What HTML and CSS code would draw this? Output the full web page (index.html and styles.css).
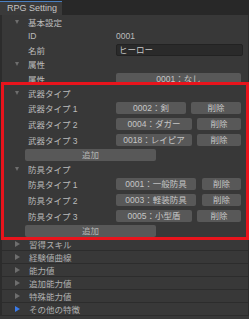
FILE: index.html
```html
<!DOCTYPE html>
<html lang="ja">
<head>
    <meta charset="UTF-8">
    <meta name="viewport" content="width=device-width, initial-scale=1.0">
    <title>RPG Setting</title>
    <link rel="stylesheet" href="styles.css">
</head>
<body>

    <div class="window">
        <div class="tabbar">
            <div class="tab">RPG Setting</div>
        </div>

        <div class="panel">
            <div class="head"><span class="arrow open"></span>基本設定</div>
            <div class="row row-id">
                <span class="label">ID</span>
                <span class="value">0001</span>
            </div>
            <div class="row row-field">
                <span class="label">名前</span>
                <div class="value"><div class="field">ヒーロー</div></div>
            </div>

            <div class="head"><span class="arrow open"></span>属性</div>
            <div class="row row-field">
                <span class="label">属性</span>
                <div class="value"><button class="btn full">0001：なし</button></div>
            </div>

            <div class="head"><span class="arrow open"></span>武器タイプ</div>
            <div class="row row-btn">
                <span class="label">武器タイプ 1</span>
                <div class="pair pair-wide"><button class="btn">0002：剣</button><button class="btn">削除</button></div>
            </div>
            <div class="row row-btn">
                <span class="label">武器タイプ 2</span>
                <div class="pair"><button class="btn">0004：ダガー</button><button class="btn">削除</button></div>
            </div>
            <div class="row row-btn">
                <span class="label">武器タイプ 3</span>
                <div class="pair"><button class="btn">0018：レイピア</button><button class="btn">削除</button></div>
            </div>
            <div class="add-row"><button class="btn add">追加</button></div>

            <div class="head"><span class="arrow open"></span>防具タイプ</div>
            <div class="row row-btn">
                <span class="label">防具タイプ 1</span>
                <div class="pair pair-narrow"><button class="btn">0001：一般防具</button><button class="btn">削除</button></div>
            </div>
            <div class="row row-btn">
                <span class="label">防具タイプ 2</span>
                <div class="pair pair-narrow"><button class="btn">0003：軽装防具</button><button class="btn">削除</button></div>
            </div>
            <div class="row row-btn">
                <span class="label">防具タイプ 3</span>
                <div class="pair"><button class="btn">0005：小型盾</button><button class="btn">削除</button></div>
            </div>
            <div class="add-row"><button class="btn add">追加</button></div>

            <div class="fold"><span class="arrow"></span>習得スキル</div>
            <div class="fold"><span class="arrow"></span>経験値曲線</div>
            <div class="fold"><span class="arrow"></span>能力値</div>
            <div class="fold"><span class="arrow"></span>追加能力値</div>
            <div class="fold"><span class="arrow"></span>特殊能力値</div>
            <div class="fold selected"><span class="arrow"></span>その他の特徴</div>
        </div>

        <!-- 注目枠 -->
        <div class="highlight"></div>
    </div>

</body>
</html>
```

FILE: styles.css
```css
body {
    margin: 0;
    background-color: #383838;
    color: #bcbcbc;
    font-family: "Liberation Sans", "Noto Sans CJK JP", sans-serif;
    font-size: 8.5px;
}

.window {
    position: relative;
    width: 249px;
    height: 319px;
    overflow: hidden;
}

.tabbar {
    height: 15px;
    background-color: #282828;
    box-sizing: border-box;
    padding-top: 1px;
    display: flex;
}

.tab {
    width: 62px;
    background-color: #3a3a3a;
    border-top: 1px solid #4a7fc0;
    box-sizing: border-box;
    padding-left: 7px;
    font-size: 9px;
    line-height: 13px;
    color: #c4c4c4;
}

.panel {
    border-left: 2px solid #2c2c2c;
    border-right: 1px solid #2c2c2c;
}

.head {
    height: 14px;
    display: flex;
    align-items: center;
    padding-left: 13px;
}

.arrow {
    width: 0;
    height: 0;
    margin-right: 9px;
    border-top: 3px solid transparent;
    border-bottom: 3px solid transparent;
    border-left: 5px solid #6e6e6e;
}

.arrow.open {
    border-left: 2.5px solid transparent;
    border-right: 2.5px solid transparent;
    border-top: 4px solid #6e6e6e;
    border-bottom: none;
}

.row {
    display: flex;
    align-items: center;
    padding-left: 26px;
    padding-right: 7px;
}

.row-id { height: 13px; }
.row-field { height: 15px; }
.row-btn { height: 16px; }

.label {
    width: 88px;
    flex-shrink: 0;
}

.value {
    flex: 1;
    display: flex;
}

.field {
    flex: 1;
    height: 12px;
    margin-right: -2px;
    padding-left: 2px;
    background-color: #2a2a2a;
    border: 1px solid #222;
    border-radius: 2px;
    box-sizing: border-box;
    line-height: 10px;
    color: #c8c8c8;
}

.btn {
    height: 12px;
    padding: 0;
    border: none;
    border-radius: 2px;
    background-color: #585858;
    color: #c6c6c6;
    font-family: inherit;
    font-size: 8.5px;
    line-height: 12px;
    white-space: nowrap;
    min-width: 0;
}

.full { flex: 1; }

.pair {
    flex: 1;
    display: grid;
    grid-template-columns: 1fr 44px;
    column-gap: 5px;
}

.pair-wide { grid-template-columns: 1fr 50px; }
.pair-narrow { grid-template-columns: 1fr 39px; column-gap: 6px; }

.add-row {
    height: 14px;
    display: flex;
    align-items: center;
    padding-left: 23px;
}

.add {
    width: 131px;
    color: #b4b4b4;
}

.fold {
    height: 13px;
    box-sizing: border-box;
    border-bottom: 1px solid #2c2c2c;
    display: flex;
    align-items: center;
    padding-left: 13px;
    color: #b0b0b0;
}

.fold.selected .arrow { border-left-color: #3b7be8; }

.highlight {
    position: absolute;
    left: 1px;
    top: 82px;
    width: 248px;
    height: 158px;
    border: 3px solid #e8141c;
    box-sizing: border-box;
}
```
